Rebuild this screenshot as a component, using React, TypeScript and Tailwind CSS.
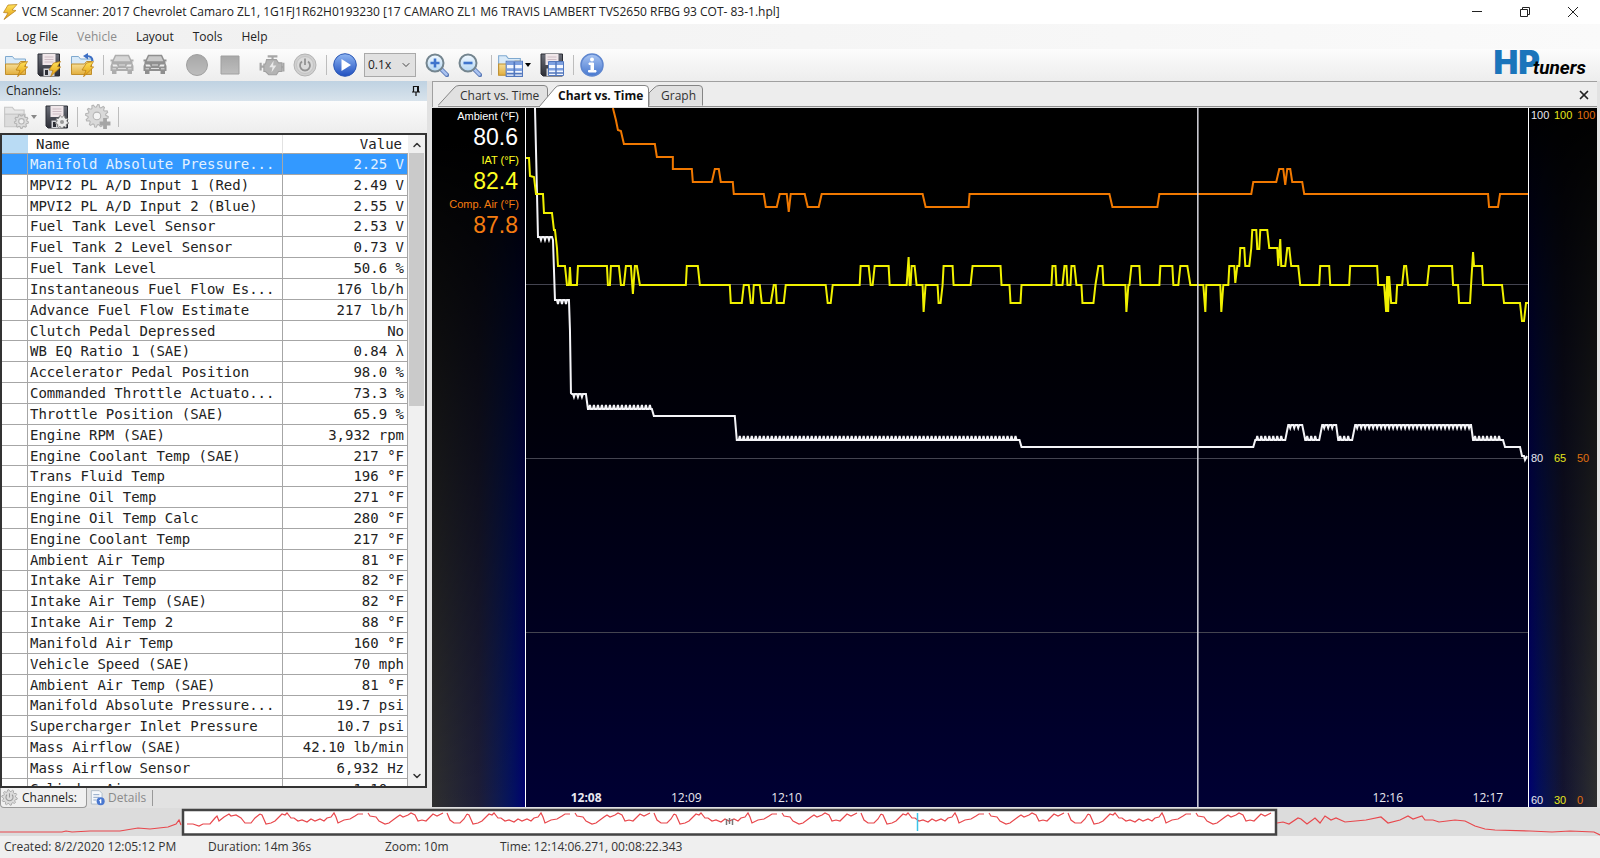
import { useState } from "react";
import type { ReactNode } from "react";
import { ChevronDown, ChevronUp, X } from "lucide-react";

const channels: [string, string][] = [
  ["Manifold Absolute Pressure...", "2.25 V"],
  ["MPVI2 PL A/D Input 1 (Red)", "2.49 V"],
  ["MPVI2 PL A/D Input 2 (Blue)", "2.55 V"],
  ["Fuel Tank Level Sensor", "2.53 V"],
  ["Fuel Tank 2 Level Sensor", "0.73 V"],
  ["Fuel Tank Level", "50.6 %"],
  ["Instantaneous Fuel Flow Es...", "176 lb/h"],
  ["Advance Fuel Flow Estimate", "217 lb/h"],
  ["Clutch Pedal Depressed", "No"],
  ["WB EQ Ratio 1 (SAE)", "0.84 λ"],
  ["Accelerator Pedal Position", "98.0 %"],
  ["Commanded Throttle Actuato...", "73.3 %"],
  ["Throttle Position (SAE)", "65.9 %"],
  ["Engine RPM (SAE)", "3,932 rpm"],
  ["Engine Coolant Temp (SAE)", "217 °F"],
  ["Trans Fluid Temp", "196 °F"],
  ["Engine Oil Temp", "271 °F"],
  ["Engine Oil Temp Calc", "280 °F"],
  ["Engine Coolant Temp", "217 °F"],
  ["Ambient Air Temp", "81 °F"],
  ["Intake Air Temp", "82 °F"],
  ["Intake Air Temp (SAE)", "82 °F"],
  ["Intake Air Temp 2", "88 °F"],
  ["Manifold Air Temp", "160 °F"],
  ["Vehicle Speed (SAE)", "70 mph"],
  ["Ambient Air Temp (SAE)", "81 °F"],
  ["Manifold Absolute Pressure...", "19.7 psi"],
  ["Supercharger Inlet Pressure", "10.7 psi"],
  ["Mass Airflow (SAE)", "42.10 lb/min"],
  ["Mass Airflow Sensor", "6,932 Hz"],
  ["Cylinder Airmass", "1.10 g"],
];

// small sawtooth ripple between x0 and x1; dy is the tooth height, negative is up
function teeth(x0: number, x1: number, y: number, dy: number) {
  let s = `${x0},${y} `;
  for (let x = x0; x + 4 <= x1; x += 4) {
    s += `${x + 1},${y} ${x + 2},${y + dy} ${x + 3},${y} `;
  }
  return s + `${x1},${y} `;
}

const ambient =
  "535,108 536,150 538,237 " +
  teeth(539, 552, 237, 3) +
  "553,240 555,300 " +
  teeth(556, 569, 300, 4) +
  "570,330 571,393 " +
  teeth(572, 586, 394, 3) +
  teeth(588, 652, 409, -4) +
  "654,416 735,416 737,440 " +
  teeth(738, 1020, 440, -4) +
  "1022,447 1254,447 " +
  teeth(1256, 1286, 440, -4) +
  teeth(1289, 1303, 425, 3) +
  teeth(1306, 1320, 440, -4) +
  teeth(1323, 1337, 425, 3) +
  teeth(1339, 1353, 440, -4) +
  teeth(1356, 1472, 425, 3) +
  teeth(1474, 1504, 440, -4) +
  "1506,447 1521,447 1523,456 1525,456 1526,460 1528,456";

const iat =
  "526,158 529,158 530,176 534,177 536,194 543,194 544,213 552,213 554,230 555,230 557,248 558,266 565,266 567,285 569,285 570,267 571,285 577,285 578,266 607,266 608,285 610,285 611,266 619,266 621,285 624,285 626,266 631,266 633,294 635,266 637,266 640,285 686,285 687,266 698,266 700,285 730,285 731,303 742,303 744,285 749,285 751,303 753,303 754,285 760,285 762,303 771,303 774,285 776,285 777,303 784,303 786,285 826,285 828,303 831,303 833,285 860,285 861,266 869,266 871,285 873,285 875,266 889,266 890,285 907,285 909,257 910,285 911,285 912,266 915,266 917,285 923,285 924,312 926,285 938,285 939,303 941,303 943,285 944,266 953,266 954,285 971,285 973,266 1001,266 1002,285 1010,285 1011,303 1021,303 1022,285 1052,285 1053,266 1056,266 1057,285 1063,285 1065,266 1067,266 1068,285 1071,285 1072,266 1075,266 1077,285 1082,285 1083,303 1094,303 1096,285 1099,266 1103,266 1104,285 1126,285 1127,312 1129,285 1130,285 1132,266 1140,266 1141,285 1160,285 1161,266 1173,266 1174,285 1179,285 1181,266 1188,266 1191,285 1204,285 1206,312 1207,285 1221,285 1222,312 1224,285 1229,285 1230,266 1235,266 1236,283 1238,266 1240,266 1241,248 1245,248 1246,266 1250,266 1252,248 1253,230 1257,230 1258,249 1260,249 1261,230 1268,230 1270,248 1278,248 1279,266 1281,239 1282,266 1286,266 1288,248 1290,248 1292,266 1299,266 1301,285 1320,285 1321,266 1330,266 1331,285 1350,285 1351,266 1378,266 1379,285 1385,285 1387,312 1388,276 1389,312 1390,276 1392,303 1397,303 1398,285 1403,285 1405,266 1407,266 1409,285 1428,285 1430,266 1453,266 1454,285 1459,285 1460,303 1471,303 1472,285 1474,252 1475,266 1483,266 1484,285 1503,285 1505,303 1521,303 1523,321 1525,321 1527,303 1529,303";

const compAir =
  "613,108 616,120 618,130 621,131 624,144 655,144 657,157 673,157 673,169 692,169 693,182 712,182 715,169 719,169 721,182 733,182 734,194 764,194 766,207 777,207 780,194 787,194 789,212 791,194 805,194 808,207 819,207 822,194 923,194 926,207 969,207 970,194 1110,194 1113,207 1158,207 1160,194 1252,194 1254,182 1277,182 1280,169 1284,169 1286,185 1288,169 1291,169 1293,182 1303,182 1305,194 1489,194 1490,207 1499,207 1501,194 1529,194";

const lapShape: [number, number][][] = [
  [[0, 814], [2, 815], [6, 824], [11, 823], [15, 821], [22, 814], [25, 815], [27, 813], [31, 818], [34, 818], [38, 821], [42, 820], [47, 822], [51, 819], [55, 821], [60, 819], [64, 821], [67, 818], [71, 817], [74, 813], [76, 817], [78, 823], [84, 820], [90, 819], [95, 816], [98, 814], [103, 814]],
  [[108, 813], [110, 816], [116, 817], [119, 821], [125, 824], [129, 823], [137, 817], [140, 815], [143, 817], [148, 815], [151, 813], [155, 815], [158, 821], [162, 820], [166, 821], [173, 814], [177, 816], [183, 813]],
  [[187, 813], [190, 820], [194, 823], [200, 823], [204, 819], [207, 814]],
];

function overviewPath() {
  let d =
    "M0,832 L62,832 66,831 72,832 90,831 120,831 138,828 150,829 168,827 176,824 179,820 181,825 M187,824 L193,824 199,826 203,824 210,824 215,818 217,816 219,821 224,817 229,814 231,816 236,815 241,818 245,823 251,823 255,818 260,814 ";
  for (let start = 260; start < 1270; start += 207) {
    for (const run of lapShape) {
      const pts = run.filter(([x]) => x + start < 1272);
      if (pts.length) d += "M" + pts.map(([x, y]) => `${x + start},${y}`).join(" L") + " ";
    }
  }
  return (
    d +
    "M1277,823 L1283,822 1289,824 1298,818 1301,819 1307,824 1315,818 1320,823 1325,816 1331,820 1336,818 1345,822 1366,820 1381,817 1388,823 1400,820 1408,816 1413,819 1422,816 1425,820 1433,820 1439,822 1455,820 1465,821 1475,826 1485,829 1495,830 1530,831 1552,832 1570,831 1594,832 1600,835"
  );
}

function Svg({ children, className = "size-6" }: { children: ReactNode; className?: string }) {
  return (
    <svg viewBox="0 0 24 24" fill="none" className={className} aria-hidden="true">
      {children}
    </svg>
  );
}

function Gradients() {
  const grads: [string, string, string][] = [
    ["gold", "#fbe9ad", "#e2ae3c"],
    ["bolt", "#ffe25a", "#e09a10"],
    ["blue", "#8fb6f2", "#1f4fc0"],
    ["info", "#a9c5f3", "#4677cf"],
    ["grey", "#a8a8a8", "#bdbdbd"],
    ["dark", "#6b6e78", "#2c2e36"],
    ["lens", "#f2f9ff", "#b4d6f3"],
  ];
  return (
    <svg className="absolute size-0" aria-hidden="true">
      <defs>
        {grads.map(([id, a, b]) => (
          <linearGradient key={id} id={id} x1="0" y1="0" x2="0" y2="1">
            <stop offset="0" stopColor={a} />
            <stop offset="1" stopColor={b} />
          </linearGradient>
        ))}
      </defs>
    </svg>
  );
}

function Bolt() {
  return (
    <path
      d="M16.500 10 23.500 8.500l-3 5 3.200.5L13.500 23.800l2.500-6.300-4-.5z"
      fill="url(#bolt)"
      stroke="#b87a10"
      strokeWidth=".7"
    />
  );
}

function FolderBase() {
  return (
    <>
      <path d="M1.500 3.500h7l2 2.500h11v14h-20z" fill="#d9eaf8" stroke="#7fa9cf" />
      <path d="M1.500 11h13l2-2.500h5V21.500h-20z" fill="url(#gold)" stroke="#c08f2d" />
    </>
  );
}

function FloppyBase() {
  return (
    <>
      <path d="M1 1h21.500v22H3l-2-2z" fill="url(#dark)" stroke="#2b2d34" />
      <path d="M5.500 1h13v11h-13z" fill="#f0e7ea" />
      <path d="M7.500 4h9M7.500 6.500h9M7.500 9h9" stroke="#cdbcc4" />
      <path d="M6.500 15.500h11V23h-11z" fill="#d4d6da" />
      <path d="M8 17h3v5H8z" fill="#2c2e36" />
    </>
  );
}

function GridBase() {
  return (
    <>
      <path d="M8.500 8.500h15v14h-15z" fill="#f3f7ff" stroke="#5277bd" />
      <path d="M9 9h14v3H9zM9 15h14v2.500H9z" fill="#7da0e0" />
      <path d="M16 9v13.500M9 20h14" stroke="#5277bd" strokeWidth="1.500" />
    </>
  );
}

function Car({ dark = false }: { dark?: boolean }) {
  const c = dark ? "#8f8f8f" : "#adadad";
  return (
    <Svg>
      <path d="M5.500 2.500h13L21.500 9h-19z" fill={dark ? "#c9c9c9" : "#d6d6d6"} stroke={c} strokeWidth="1.500" />
      <path d="M.5 7.500h3M20.500 7.500h3" stroke={c} strokeWidth="2" />
      <path d="M2 9h20l1.500 4v5H.5v-5z" fill={c} />
      <path d="M2 17.500h4.500V21H2zM17.500 17.500H22V21h-4.500z" fill={c} />
      <path d="M2.500 11.500h4l1.500 2H3zM21.500 11.500h-4l-1.500 2h5z" fill="#ececec" />
      <path d="M8 15.500h8M2.500 15.800h3.500M18 15.800h3.500M9 12h6" stroke="#dedede" />
    </Svg>
  );
}

function gearPath(cx: number, cy: number, r: number, n: number) {
  let d = "";
  for (let i = 0; i < n * 4; i++) {
    const rad = i % 4 < 2 ? r : r * 0.78;
    const a = ((i + 0.5) / (n * 4)) * Math.PI * 2;
    d += `${i ? "L" : "M"}${(cx + rad * Math.cos(a)).toFixed(2)} ${(cy + rad * Math.sin(a)).toFixed(2)}`;
  }
  return d + "z";
}

function Magnifier({ plus = false }: { plus?: boolean }) {
  return (
    <Svg>
      <path d="m16 16 6 6" stroke="#5c7bb8" strokeWidth="4.500" strokeLinecap="round" />
      <path d="m16.500 16.500 5 5" stroke="#a9c2f0" strokeWidth="2.500" strokeLinecap="round" />
      <circle cx="10" cy="10" r="8.500" fill="url(#lens)" stroke="#74858f" strokeWidth="2" />
      <path d={plus ? "M5.500 10h9M10 5.500v9" : "M5.500 10h9"} stroke="#3f74cc" strokeWidth="2.600" />
    </Svg>
  );
}

function Sep() {
  return <span className="h-5 w-px bg-[#bdbdbd]" />;
}

function Tool({ label, children, disabled }: { label: string; children: ReactNode; disabled?: boolean }) {
  return (
    <button type="button" aria-label={label} disabled={disabled} className="flex h-7 w-6 items-center justify-center">
      {children}
    </button>
  );
}

function Toolbar() {
  const [speed, setSpeed] = useState("0.1x");
  return (
    <div className="flex h-8 shrink-0 items-center gap-[9px] bg-linear-to-b from-[#fcfcfc] to-[#ededed] pr-[14px] pl-1">
      <Tool label="Open log">
        <Svg>
          <FolderBase />
          <Bolt />
        </Svg>
      </Tool>
      <Tool label="Save log">
        <Svg>
          <FloppyBase />
          <Bolt />
        </Svg>
      </Tool>
      <Tool label="Reload log">
        <Svg>
          <FolderBase />
          <path d="M22.500 8c0-4-2.500-5-6-5" stroke="#3d6fc4" strokeWidth="2" />
          <path d="m18 0-5 3 5 3.500z" fill="#3d6fc4" />
          <Bolt />
        </Svg>
      </Tool>
      <div className="flex items-center gap-[6px]">
        <Sep />
        <Tool label="Connect" disabled>
          <Car />
        </Tool>
      </div>
      <Tool label="Disconnect" disabled>
        <Car dark />
      </Tool>
      <span />
      <Tool label="Record" disabled>
        <Svg>
          <circle cx="12" cy="12" r="10.500" fill="url(#grey)" stroke="#a0a0a0" />
        </Svg>
      </Tool>
      <Tool label="Stop" disabled>
        <Svg>
          <path d="M3 3h18v18H3z" fill="url(#grey)" stroke="#a0a0a0" />
        </Svg>
      </Tool>
      <span />
      <Tool label="Engine codes" disabled>
        <Svg className="size-[26px] shrink-0">
          <path d="M8 4h9M12.500 4v3M1.500 10v7M1.500 13.500H5M22.500 10v8M20 14h2.500" stroke="#a6a6a6" strokeWidth="2" />
          <path d="M7 7h9l2 3h3v8h-3l-2 3H9l-3-3H4.500v-7H6z" fill="#b4b4b4" stroke="#a0a0a0" />
          <path d="m13.500 8-4 6h3l-1 5 4.500-6.500h-3z" fill="#e9e9e9" />
        </Svg>
      </Tool>
      <Tool label="Power" disabled>
        <Svg>
          <circle cx="12" cy="12" r="11" fill="#cfcfcf" stroke="#b4b4b4" />
          <circle cx="12" cy="12" r="8.500" fill="#dadada" stroke="#c4c4c4" />
          <path d="M9 8.500a5 5 0 1 0 6 0" stroke="#929292" strokeWidth="1.800" />
          <path d="M12 5.500V12" stroke="#929292" strokeWidth="1.800" />
        </Svg>
      </Tool>
      <div className="flex items-center gap-[6px]">
        <Sep />
        <Tool label="Play">
          <Svg>
            <circle cx="12" cy="12" r="11.300" fill="url(#blue)" stroke="#2c58b5" />
            <path d="M8.500 6v12L18 12z" fill="#fff" />
          </Svg>
        </Tool>
      </div>
      <label className="relative ml-[-2px] flex items-center">
        <select
          aria-label="Playback speed"
          value={speed}
          onChange={(e) => setSpeed(e.target.value)}
          className="h-6 w-[52px] appearance-none border border-[#a9a9a9] bg-[#e1e1e1] pl-[3px] text-xs text-[#222]"
        >
          <option>0.1x</option>
          <option>0.5x</option>
          <option>1x</option>
          <option>2x</option>
        </select>
        <ChevronDown className="pointer-events-none absolute right-1 size-3 text-[#444]" />
      </label>
      <Tool label="Zoom in">
        <Magnifier plus />
      </Tool>
      <Tool label="Zoom out">
        <Magnifier />
      </Tool>
      <div className="flex items-center gap-[6px]">
        <Sep />
        <Tool label="Open layout">
          <Svg className="size-[26px] shrink-0">
            <FolderBase />
            <GridBase />
          </Svg>
        </Tool>
        <span className="ml-[-3px] h-0 w-0 border-x-[3px] border-t-[4px] border-x-transparent border-t-black" />
      </div>
      <Tool label="Save layout">
        <Svg>
          <FloppyBase />
          <GridBase />
        </Svg>
      </Tool>
      <div className="flex items-center gap-[6px]">
        <Sep />
        <Tool label="Info">
          <Svg>
            <circle cx="12" cy="12" r="11" fill="url(#info)" stroke="#5e86cf" strokeWidth="1.500" />
            <circle cx="12" cy="6.500" r="2" fill="#fff" />
            <path d="M9 10h4.500v7.500H16V19H8.500v-1.500H11v-6H9z" fill="#fff" stroke="#fff" />
          </Svg>
        </Tool>
      </div>
      <div className="ml-auto flex items-baseline leading-8">
        <span className="font-[Inter] text-[33px] font-black text-[#1b75bb]">HP</span>
        <span className="relative ml-[-7px] font-[Roboto] text-[19px] font-bold text-black italic">tuners</span>
      </div>
    </div>
  );
}

function ChannelsPanel() {
  const [selected, setSelected] = useState(0);
  return (
    <aside className="flex w-[427px] shrink-0 flex-col bg-[#e2e2e2]">
      <header className="flex h-5 shrink-0 items-center justify-between bg-linear-to-b from-[#bfd2e2] to-[#d8e3ec] pr-[5px] pl-[6px] text-[#222]">
        <h2>Channels:</h2>
        <button type="button" aria-label="Pin panel">
          <svg viewBox="0 0 12 12" className="size-3" aria-hidden="true">
            <path d="M3.500 1v5.500M3.500 1.500h4M2 7h8M6 7v4" stroke="#111" strokeWidth="1.200" fill="none" />
            <path d="M7 1h2v6H7z" fill="#111" />
          </svg>
        </button>
      </header>
      <div className="flex h-8 shrink-0 items-center gap-2 bg-linear-to-b from-[#fcfcfc] to-[#ededed] pl-[3px]">
        <button type="button" aria-label="Load channels" disabled className="flex items-center gap-[2px]">
          <Svg className="size-[26px]">
            <path d="M1.500 3h7l2 2.500h9v4H1.500z" fill="#e6e6e6" stroke="#c6c6c6" />
            <path d="M1.500 9.500h19V21h-19z" fill="#dcdcdc" stroke="#c6c6c6" />
            <path d={gearPath(17, 16, 6.5, 9)} fill="#dcdcdc" stroke="#b4b4b4" />
            <circle cx="17" cy="16" r="2.500" fill="#f0f0f0" stroke="#b4b4b4" />
          </Svg>
          <span className="h-0 w-0 border-x-[3px] border-t-[4px] border-x-transparent border-t-[#888]" />
        </button>
        <Tool label="Save channels">
          <Svg>
            <FloppyBase />
            <path d={gearPath(17, 17, 6.5, 9)} fill="#ececec" stroke="#777" />
            <circle cx="17" cy="17" r="2" fill="#999" />
          </Svg>
        </Tool>
        <Sep />
        <Tool label="Add channel" disabled>
          <Svg className="size-[26px] shrink-0">
            <path d={gearPath(11, 11, 10.5, 12)} fill="#d9d9d9" stroke="#b5b5b5" />
            <circle cx="11" cy="11" r="3.500" fill="#f4f4f4" stroke="#b5b5b5" />
            <path d="M18.500 13v10M13.500 18h10" stroke="#a5a5a5" strokeWidth="3.500" />
          </Svg>
        </Tool>
        <Sep />
      </div>
      <div className="flex min-h-0 flex-1 overflow-hidden border-2 border-[#333] bg-white">
        <div className="flex-1 overflow-hidden">
          <table className="h-[665px] w-full table-fixed border-separate border-spacing-0 font-['DejaVu_Sans_Mono',monospace] text-sm leading-4 text-[#222]">
            <colgroup>
              <col className="w-[26px]" />
              <col className="w-[255px]" />
              <col />
            </colgroup>
            <thead>
              <tr className="h-[19px]">
                <th aria-label="Marker" className="border-b border-[#a6a6a6] bg-[#b9dbf4] p-0" />
                <th className="border-r border-b border-r-[#e2e2e2] border-b-[#a6a6a6] p-0 pl-2 text-left font-normal">Name</th>
                <th className="border-b border-[#a6a6a6] p-0 pr-[6px] text-right font-normal">Value</th>
              </tr>
            </thead>
            <tbody>
              {channels.map(([name, value], i) => (
                <tr
                  key={i}
                  onClick={() => setSelected(i)}
                  className={i === selected ? "bg-[#3399ff] text-[#e3f1ff]" : "bg-white"}
                >
                  <td className="border-r border-b border-[#a6a6a6] p-0" />
                  <td className="overflow-hidden border-r border-b border-[#a6a6a6] p-0 pl-[2px] whitespace-nowrap">{name}</td>
                  <td className="border-r border-b border-[#a6a6a6] p-0 pr-[3px] text-right whitespace-nowrap">{value}</td>
                </tr>
              ))}
            </tbody>
          </table>
        </div>
        <div className="flex w-[17px] shrink-0 flex-col items-center bg-[#f0f0f0] py-1">
          <ChevronUp className="size-3 text-[#333]" strokeWidth={3} />
          <span className="mt-[2px] h-[253px] w-[15px] bg-[#cacaca]" />
          <ChevronDown className="mt-auto size-3 text-[#333]" strokeWidth={3} />
        </div>
      </div>
      <div className="flex h-5 shrink-0 items-center">
        <button type="button" className="flex h-full w-[87px] items-center gap-1 rounded-b border border-t-0 border-[#999] bg-[#f0f0f0] text-[#222]">
          <Svg className="size-[17px]">
            <path d={gearPath(12, 12, 11, 10)} fill="#dcdcdc" stroke="#999" />
            <path d="M8.500 8a5 5 0 1 0 7 0M12 6v6" stroke="#999" strokeWidth="1.500" />
          </Svg>
          Channels:
        </button>
        <button type="button" className="flex h-4 items-center gap-[2px] border-r border-[#999] pr-[6px] pl-[3px] text-[#8a8a8a]">
          <Svg className="size-4">
            <path d="M2 1h12l4 4v16H2z" fill="#f4f7fb" stroke="#9ab" />
            <path d="M5 7h9M5 11h9M5 15h5" stroke="#8fa8c8" strokeWidth="1.500" />
            <circle cx="16" cy="17" r="6" fill="#4a78d0" />
            <path d="M16 14v6M14 16h2" stroke="#fff" strokeWidth="2" />
          </Svg>
          Details
        </button>
      </div>
    </aside>
  );
}

function ChartTabs() {
  return (
    <div className="flex h-[26px] shrink-0 items-end border-t border-l border-[#a0a0a0] bg-[#ededed] pl-[5px]">
      <div className="flex flex-1 items-end border-b border-[#909090]">
        <button type="button" className="relative h-[21px] w-[110px] pl-[22px] text-left text-[#333]">
          <svg viewBox="0 0 110 21" className="absolute inset-0 size-full" preserveAspectRatio="none" aria-hidden="true">
            <path d="M0 20.500 16 3q2-2.500 5-2.500h85q3.500 0 3.500 3.500v16.500" fill="#e1e1e1" stroke="#858585" />
          </svg>
          <span className="relative">Chart vs. Time</span>
        </button>
        <button type="button" className="relative z-10 mb-[-1px] ml-[-9px] h-[22px] w-[110px] pl-[19px] text-left font-bold text-[#111]">
          <svg viewBox="0 0 110 22" className="absolute inset-0 size-full" preserveAspectRatio="none" aria-hidden="true">
            <path d="M0 22 16 3q2-2.500 5-2.500h85q3.500 0 3.500 3.500v18" fill="#fff" stroke="#858585" />
          </svg>
          <span className="relative">Chart vs. Time</span>
        </button>
        <button type="button" className="relative h-[21px] w-[54px] pl-3 text-left text-[#333]">
          <svg viewBox="0 0 54 21" className="absolute inset-0 size-full" preserveAspectRatio="none" aria-hidden="true">
            <path d="M0 20.500V8l5-5q2.500-2.500 5-2.500h40q3.500 0 3.500 3.500v16.500" fill="#e1e1e1" stroke="#858585" />
          </svg>
          <span className="relative">Graph</span>
        </button>
        <button type="button" aria-label="Close tab" className="mr-[6px] mb-1 ml-auto">
          <X className="size-[14px] text-[#222]" strokeWidth={3} />
        </button>
      </div>
    </div>
  );
}

function Reading({ label, value, className }: { label: string; value: string; className: string }) {
  return (
    <div className={className}>
      <div className="text-[11px] leading-4">{label}</div>
      <div className="pr-px pb-[2px] text-[23px] leading-[26px]">{value}</div>
    </div>
  );
}

function Scale({ marks, className }: { marks: string[]; className: string }) {
  return (
    <div className={`flex w-[23px] shrink-0 flex-col justify-between ${className}`}>
      {marks.map((m) => (
        <span key={m}>{m}</span>
      ))}
    </div>
  );
}

function Chart() {
  return (
    <div className="flex min-h-0 flex-1 border-t border-b border-[#e0e0e0] font-['Liberation_Sans',sans-serif]">
      <div className="relative w-[93px] shrink-0 bg-linear-to-r from-[#2f2f2f] via-[#1d1d38] to-[#000070]">
        <div className="absolute inset-0 bg-linear-to-b from-black from-5% to-transparent" />
        <div className="relative pr-[6px] text-right">
          <Reading label="Ambient (°F)" value="80.6" className="text-white" />
          <Reading label="IAT (°F)" value="82.4" className="text-[#ffff20]" />
          <Reading label="Comp. Air (°F)" value="87.8" className="text-[#f57c10]" />
        </div>
      </div>
      <div className="relative min-w-0 flex-1 border-x border-white bg-linear-to-b from-black to-[#000034]">
        <svg viewBox="526 108 1003 699" preserveAspectRatio="none" className="absolute inset-0 size-full" fill="none" aria-hidden="true">
          <path d="M526 284.500H1529M526 458.500H1529M526 632.500H1529" stroke="#444450" vectorEffect="non-scaling-stroke" />
          <polyline points={compAir} stroke="#f07800" strokeWidth="2" vectorEffect="non-scaling-stroke" />
          <polyline points={ambient} stroke="#f4f4f8" strokeWidth="2" vectorEffect="non-scaling-stroke" />
          <polyline points={iat} stroke="#f0f000" strokeWidth="2" vectorEffect="non-scaling-stroke" />
          <path d="M1198.500 108V807" stroke="#d8d8e0" strokeWidth="1.500" vectorEffect="non-scaling-stroke" />
        </svg>
        <div className="font-['Open_Sans',sans-serif] text-xs text-[#e8e8f0]">
          <span className="absolute bottom-px left-[6%] -translate-x-1/2 font-bold">12:08</span>
          <span className="absolute bottom-px left-[16%] -translate-x-1/2">12:09</span>
          <span className="absolute bottom-px left-[26%] -translate-x-1/2">12:10</span>
          <span className="absolute bottom-px left-[86%] -translate-x-1/2">12:16</span>
          <span className="absolute bottom-px left-[96%] -translate-x-1/2">12:17</span>
        </div>
      </div>
      <div className="relative w-[68px] shrink-0 bg-linear-to-r from-[#000070] via-[#141430] to-[#2f2f2f]">
        <div className="absolute inset-0 bg-linear-to-b from-black to-transparent" />
        <div className="relative flex h-full pl-[2px] text-[11px] leading-[14px]">
          <Scale marks={["100", "80", "60"]} className="text-[#e8e8f0]" />
          <Scale marks={["100", "65", "30"]} className="text-[#e6e61c]" />
          <Scale marks={["100", "50", "0"]} className="text-[#e07010]" />
        </div>
      </div>
    </div>
  );
}

function Overview() {
  return (
    <svg viewBox="0 808 1600 28" preserveAspectRatio="none" className="h-7 w-full shrink-0 bg-[#dcdcdc]" fill="none" aria-hidden="true">
      <path d="M183 810H1276V834.500H183z" fill="#fff" stroke="#444" strokeWidth="2.500" />
      <path d={overviewPath()} stroke="#e8474c" strokeWidth="1.200" />
      <path d="M726.500 819v6M729.500 818v6M732.500 819v6" stroke="#777" strokeWidth="1.500" />
      <path d="M917.500 813v18" stroke="#3cc4e8" strokeWidth="1.500" />
    </svg>
  );
}

export default function App() {
  return (
    <div className="flex h-screen flex-col overflow-hidden bg-[#efefef] font-['Open_Sans',sans-serif] text-xs leading-4">
      <Gradients />
      <div className="flex h-6 shrink-0 items-center bg-white pl-[2px] text-[#222]">
        <svg viewBox="0 0 16 16" className="mr-1 size-4" aria-hidden="true">
          <path d="M6 1 15 .5 10 6l4 .5L2 15.500 6 9 1.500 8.500z" fill="url(#bolt)" stroke="#b57a14" strokeWidth=".7" />
        </svg>
        <h1>VCM Scanner: 2017 Chevrolet Camaro ZL1, 1G1FJ1R62H0193230 [17 CAMARO ZL1 M6 TRAVIS LAMBERT TVS2650 RFBG 93 COT- 83-1.hpl]</h1>
        <div className="ml-auto flex">
          <button type="button" aria-label="Minimize" className="flex h-6 w-12 items-center justify-center">
            <svg viewBox="0 0 12 12" className="size-3" aria-hidden="true">
              <path d="M1 5.500h10" stroke="#222" />
            </svg>
          </button>
          <button type="button" aria-label="Restore" className="flex h-6 w-12 items-center justify-center">
            <svg viewBox="0 0 12 12" className="size-3" fill="none" aria-hidden="true">
              <path d="M1.500 3.500h7v7h-7zM3.500 3V1.500h7v7H9" stroke="#222" />
            </svg>
          </button>
          <button type="button" aria-label="Close" className="mr-[3px] flex h-6 w-12 items-center justify-center">
            <svg viewBox="0 0 12 12" className="size-3" aria-hidden="true">
              <path d="m1 1 10 10M11 1 1 11" stroke="#222" />
            </svg>
          </button>
        </div>
      </div>
      <nav className="flex h-[25px] shrink-0 items-center gap-[19px] bg-linear-to-r from-[#f0f0f0] to-[#fafafa] pl-4 text-[#222]">
        <button type="button">Log File</button>
        <button type="button" disabled className="text-[#8c8c8c]">
          Vehicle
        </button>
        <button type="button">Layout</button>
        <button type="button">Tools</button>
        <button type="button">Help</button>
      </nav>
      <Toolbar />
      <main className="flex min-h-0 flex-1 bg-[#e2e2e2]">
        <ChannelsPanel />
        <section className="mr-[3px] ml-[5px] flex min-w-0 flex-1 flex-col">
          <ChartTabs />
          <Chart />
        </section>
      </main>
      <Overview />
      <footer className="flex h-[22px] shrink-0 items-center pl-1 text-[#333]">
        <span className="w-[204px]">Created: 8/2/2020 12:05:12 PM</span>
        <span className="w-[177px]">Duration: 14m 36s</span>
        <span className="w-[115px]">Zoom: 10m</span>
        <span>Time: 12:14:06.271, 00:08:22.343</span>
      </footer>
    </div>
  );
}
